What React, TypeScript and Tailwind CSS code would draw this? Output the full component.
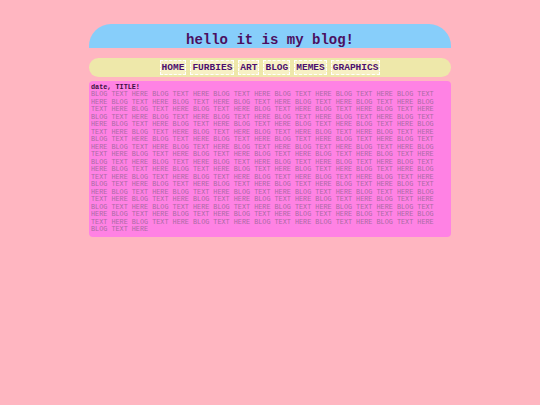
const NAV = ['HOME', 'FURBIES', 'ART', 'BLOG', 'MEMES', 'GRAPHICS'];

const POST = Array(103).fill('BLOG TEXT HERE').join(' ');

export default function App() {
  return (
    <div className="min-h-screen bg-[#ffb6c1] pt-[24px] font-['Liberation_Mono','DejaVu_Sans_Mono',monospace]">
      <div className="mx-auto w-[362px]">
        {/* Title bar */}
        <header className="h-[24px] rounded-t-[22px] bg-[#87cefa] pt-[8px] text-center">
          <h1 className="text-[14px] font-bold leading-[16px] text-[#4b0f5f]">hello it is my blog!</h1>
        </header>

        {/* Nav */}
        <nav className="mt-[10px] flex h-[19px] items-center justify-center gap-[4px] rounded-full bg-[#eee8aa]">
          {NAV.map((item) => (
            <a
              key={item}
              href="#"
              className="border border-dashed border-white bg-[#f7f1c4] px-[1px] text-[9.5px] font-bold leading-[13px] text-[#4b0f6f]"
            >
              {item}
            </a>
          ))}
        </nav>

        {/* Post */}
        <article className="mt-[4px] h-[156px] rounded-[4px] bg-[#ff82e4] px-[2px] pt-[2px]">
          <h2 className="text-[6.8px] font-bold leading-[8px] text-[#3a1040]">date, TITLE!</h2>
          <p className="break-words text-[6.8px] leading-[7.5px] text-[#ab6ca5]">{POST}</p>
        </article>
      </div>
    </div>
  );
}
